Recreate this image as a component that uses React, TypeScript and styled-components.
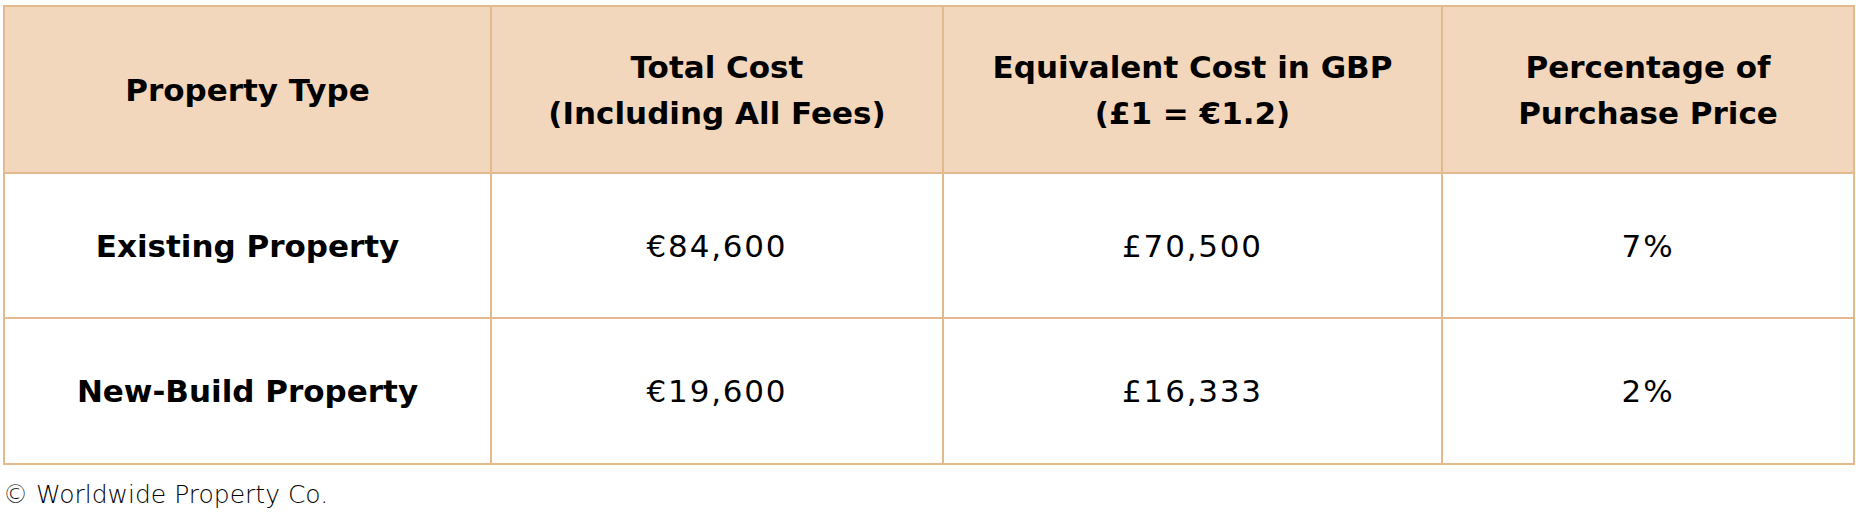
import React from "react";
import styled, { createGlobalStyle } from "styled-components";

const Global = createGlobalStyle`
  html, body { margin: 0; padding: 0; background: #ffffff; }
  body { font-family: "DejaVu Sans", "Liberation Sans", sans-serif; color: #000; }
`;

const Page = styled.div`
  display: flex;
  flex-direction: column;
  align-items: flex-start;
  padding: 5px 4px 0 3px;
`;

const Table = styled.table`
  width: 1850px;
  border-collapse: collapse;
  table-layout: fixed;
`;

const HeadCell = styled.th<{ $w: number }>`
  box-sizing: border-box;
  width: ${(p) => p.$w}px;
  height: 167px;
  background: #f2d7bc;
  border: 2px solid #e3b98e;
  font-size: 31px;
  font-weight: 700;
  line-height: 46px;
  text-align: center;
  vertical-align: middle;
  padding: 0 6px;
`;

const Cell = styled.td<{ $bold?: boolean; $h: number }>`
  box-sizing: border-box;
  height: ${(p) => p.$h}px;
  border: 2px solid #e3b98e;
  font-size: 31px;
  font-weight: ${(p) => (p.$bold ? 700 : 400)};
  letter-spacing: ${(p) => (p.$bold ? 0 : 1.8)}px;
  text-align: center;
  vertical-align: middle;
  padding: 0 6px;
`;

const Footer = styled.div`
  margin-top: 14px;
  font-size: 25px;
  font-weight: 300;
  line-height: 32px;
`;

const cols = [487, 452, 499, 412];

const rows = [
  ["Existing Property", "€84,600", "£70,500", "7%"],
  ["New-Build Property", "€19,600", "£16,333", "2%"],
];

export default function App() {
  return (
    <>
      <Global />
      <Page>
        <Table>
          <thead>
            <tr>
              <HeadCell $w={cols[0]}>Property Type</HeadCell>
              <HeadCell $w={cols[1]}>
                Total Cost
                <br />
                (Including All Fees)
              </HeadCell>
              <HeadCell $w={cols[2]}>
                Equivalent Cost in GBP
                <br />
                (£1 = €1.2)
              </HeadCell>
              <HeadCell $w={cols[3]}>
                Percentage of
                <br />
                Purchase Price
              </HeadCell>
            </tr>
          </thead>
          <tbody>
            {rows.map((r, i) => (
              <tr key={i}>
                {r.map((c, j) => (
                  <Cell key={j} $bold={j === 0} $h={i === 0 ? 145 : 146}>
                    {c}
                  </Cell>
                ))}
              </tr>
            ))}
          </tbody>
        </Table>
        <Footer>© Worldwide Property Co.</Footer>
      </Page>
    </>
  );
}
